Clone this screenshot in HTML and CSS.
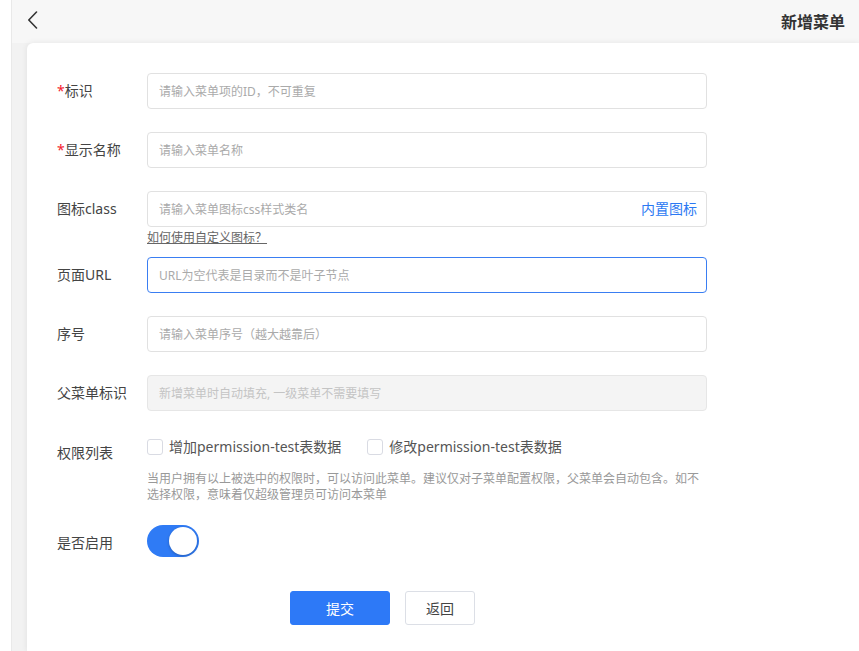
FILE: index.html
```
<!DOCTYPE html>
<html lang="zh-CN">
<head>
<meta charset="utf-8">
<title>新增菜单</title>
<link rel="stylesheet" href="styles.css">
</head>
<body>
<div class="layout">
  <div class="side"></div>
  <div class="main">
    <header class="topbar">
      <a class="back" href="#" aria-label="返回">
        <svg width="11" height="18" viewBox="0 0 11 18"><path d="M9.5 1 L1.8 9 L9.5 17" fill="none" stroke="#333" stroke-width="1.6" stroke-linecap="round" stroke-linejoin="round"/></svg>
      </a>
      <h1 class="title">新增菜单</h1>
    </header>
    <section class="card">
      <form class="form">
        <div class="item">
          <label class="label"><span class="req">*</span>标识</label>
          <div class="control"><input class="input" placeholder="请输入菜单项的ID，不可重复"></div>
        </div>
        <div class="item">
          <label class="label"><span class="req">*</span>显示名称</label>
          <div class="control"><input class="input" placeholder="请输入菜单名称"></div>
        </div>
        <div class="item item-help">
          <label class="label">图标class</label>
          <div class="control">
            <div class="input-wrap">
              <input class="input" placeholder="请输入菜单图标css样式类名">
              <a class="suffix" href="#">内置图标</a>
            </div>
            <a class="help-link" href="#">如何使用自定义图标？</a>
          </div>
        </div>
        <div class="item">
          <label class="label">页面URL</label>
          <div class="control"><input class="input input-focus" placeholder="URL为空代表是目录而不是叶子节点"></div>
        </div>
        <div class="item">
          <label class="label">序号</label>
          <div class="control"><input class="input" placeholder="请输入菜单序号（越大越靠后）"></div>
        </div>
        <div class="item">
          <label class="label">父菜单标识</label>
          <div class="control"><input class="input" disabled placeholder="新增菜单时自动填充, 一级菜单不需要填写"></div>
        </div>
        <div class="item item-perm">
          <label class="label">权限列表</label>
          <div class="control">
            <div class="checks">
              <label class="check"><span class="box"></span>增加permission-test表数据</label>
              <label class="check"><span class="box"></span>修改permission-test表数据</label>
            </div>
            <p class="tip">当用户拥有以上被选中的权限时，可以访问此菜单。建议仅对子菜单配置权限，父菜单会自动包含。如不选择权限，意味着仅超级管理员可访问本菜单</p>
          </div>
        </div>
        <div class="item item-switch">
          <label class="label">是否启用</label>
          <div class="control"><span class="switch"><span class="knob"></span></span></div>
        </div>
        <div class="actions">
          <button type="button" class="btn btn-primary">提交</button>
          <button type="button" class="btn">返回</button>
        </div>
      </form>
    </section>
  </div>
</div>
</body>
</html>
```

FILE: styles.css
```
* { box-sizing: border-box; }
html, body { margin: 0; padding: 0; height: 100%; }
body {
  font-family: "Noto Sans", "Noto Sans CJK SC", sans-serif;
  color: #333;
  background: #fff;
  overflow: hidden;
}
.layout { display: flex; height: 651px; }
.side { width: 12px; background: #fff; border-right: 1px solid #e9e9e9; flex: none; }
.main { flex: 1; display: flex; flex-direction: column; background: #f2f2f2; min-width: 0; }
.topbar {
  height: 43px;
  background: #f7f7f7;
  display: flex;
  align-items: center;
  justify-content: space-between;
  padding: 0 14px 0 15px;
  flex: none;
}
.back { display: flex; align-items: center; height: 18px; margin-top: -4px; }
.title {
  margin: 0;
  font-size: 16px;
  font-weight: 700;
  line-height: 22px;
  color: #333;
}
.card {
  flex: 1;
  margin-left: 15px;
  background: #fff;
  border-top-left-radius: 6px;
  box-shadow: 0 0 6px rgba(0, 0, 0, 0.08);
  padding: 30px 30px 0 30px;
}
.form { width: 650px; }
.item { display: flex; align-items: flex-start; margin-bottom: 23px; }
.label {
  width: 90px;
  flex: none;
  font-size: 14px;
  line-height: 36px;
  color: #444;
}
.req { color: #f5222d; }
.control { width: 560px; }
.input {
  width: 100%;
  height: 36px;
  border: 1px solid #e1e1e1;
  border-radius: 4px;
  padding: 0 11px;
  font-family: inherit;
  font-size: 12px;
  color: #333;
  outline: none;
  background: #fff;
  display: block;
}
.input::placeholder { color: #aaa; }
.input-focus { border-color: #3a7ef2; }
.input:disabled { background: #f4f4f4; border-color: #e6e6e6; }
.input:disabled::placeholder { color: #c4c4c4; }
.input-wrap { position: relative; }
.suffix {
  position: absolute;
  right: 10px;
  top: 0;
  line-height: 36px;
  font-size: 14px;
  color: #2b79f3;
  text-decoration: none;
}
.item-help { margin-bottom: 10px; }
.help-link {
  display: block;
  width: fit-content;
  margin-top: 2px;
  font-size: 12px;
  line-height: 18px;
  color: #666;
  text-decoration: underline;
}
.item-perm { padding-top: 2px; margin-bottom: 22px; }
.item-perm .label { margin-top: -1px; }
.checks { display: flex; gap: 26px; height: 22px; align-items: center; }
.check {
  display: flex;
  align-items: center;
  gap: 6px;
  font-size: 14px;
  line-height: 22px;
  color: #555;
}
.box {
  width: 16px;
  height: 16px;
  border: 1px solid #d9dbe3;
  border-radius: 3px;
  background: #fff;
}
.tip {
  margin: 13px 0 0 0;
  font-size: 12px;
  line-height: 16px;
  color: #999;
}
.item-switch { margin-bottom: 30px; }
.switch {
  display: block;
  width: 52px;
  height: 32px;
  border-radius: 16px;
  background: #2f7bf5;
  position: relative;
}
.knob {
  position: absolute;
  right: 2px;
  top: 2px;
  width: 28px;
  height: 28px;
  border-radius: 50%;
  background: #fff;
  box-shadow: 0 1px 3px rgba(0, 0, 0, 0.25);
}
.actions { display: flex; gap: 15px; padding-left: 233px; }
.btn {
  height: 34px;
  width: 70px;
  border: 1px solid #dcdfe6;
  border-radius: 3px;
  background: #fff;
  font-family: inherit;
  font-size: 14px;
  color: #444;
  cursor: pointer;
}
.btn-primary {
  width: 100px;
  background: #2d79f7;
  border-color: #2d79f7;
  color: #fff;
}
```
